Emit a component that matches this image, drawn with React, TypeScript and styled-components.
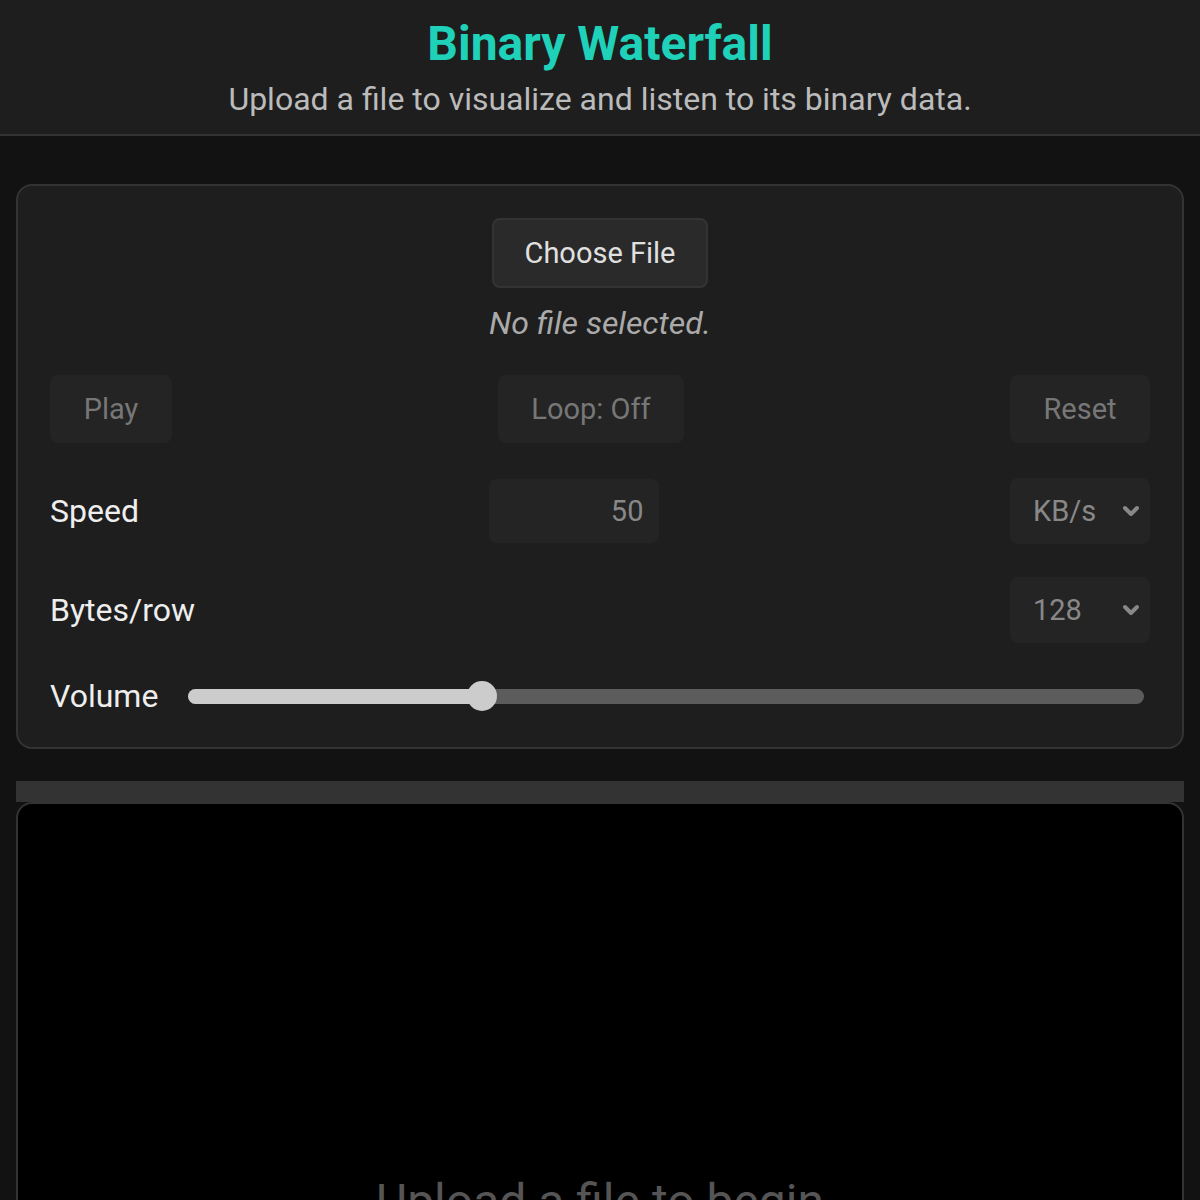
import React from "react";
import styled, { createGlobalStyle } from "styled-components";

const Global = createGlobalStyle`
  html, body { margin: 0; padding: 0; background: #121212; }
  body { font-family: Roboto, "Noto Sans", "Liberation Sans", sans-serif; color: #e0e0e0; }
  * { box-sizing: border-box; }
`;

const Page = styled.div`
  width: 1200px;
  height: 1200px;
  overflow: hidden;
  background: #121212;
`;

const Header = styled.header`
  height: 136px;
  background: #1e1e1e;
  border-bottom: 2px solid #333;
  display: flex;
  flex-direction: column;
  align-items: center;
  padding-top: 14px;
`;

const Title = styled.h1`
  margin: 0;
  font-size: 48px;
  line-height: 60px;
  font-weight: 700;
  color: #1fd1b9;
`;

const Subtitle = styled.p`
  margin: 0;
  font-size: 32px;
  line-height: 50px;
  color: #bbbbbb;
`;

const Main = styled.main`
  padding: 48px 16px 0;
  display: flex;
  flex-direction: column;
`;

const Panel = styled.section`
  background: #1e1e1e;
  border: 2px solid #333;
  border-radius: 16px;
  padding: 32px;
  display: flex;
  flex-direction: column;
`;

const FileBlock = styled.div`
  display: flex;
  flex-direction: column;
  align-items: center;
`;

const FileButton = styled.button`
  width: 216px;
  height: 70px;
  background: #2a2a2a;
  border: 2px solid #333;
  border-radius: 8px;
  color: #e0e0e0;
  font-family: inherit;
  font-size: 29px;
`;

const FileName = styled.div`
  margin-top: 16px;
  font-size: 32px;
  line-height: 38px;
  font-style: italic;
  color: #aaaaaa;
`;

const Row = styled.div<{ $mt: number; $h: number }>`
  margin-top: ${(p) => p.$mt}px;
  height: ${(p) => p.$h}px;
  display: flex;
  align-items: center;
  justify-content: space-between;
`;

const Btn = styled.button<{ $w: number }>`
  width: ${(p) => p.$w}px;
  height: 68px;
  background: #242424;
  border: none;
  border-radius: 8px;
  color: #777;
  font-family: inherit;
  font-size: 29px;
`;

const Label = styled.span`
  font-size: 32px;
  color: #eeeeee;
`;

const NumberBox = styled.div`
  width: 170px;
  height: 64px;
  background: #242424;
  border-radius: 8px;
  display: flex;
  align-items: center;
  justify-content: flex-end;
  padding-right: 16px;
  font-size: 29px;
  color: #888;
`;

const Select = styled.div`
  width: 140px;
  height: 66px;
  background: #242424;
  border-radius: 8px;
  display: flex;
  align-items: center;
  justify-content: space-between;
  padding: 0 7px 0 23px;
  font-size: 29px;
  color: #888;
`;

const Slider = styled.div`
  flex: 1;
  margin-left: 30px;
  margin-right: 6px;
  height: 30px;
  position: relative;
  display: flex;
  align-items: center;
`;

const Track = styled.div`
  width: 100%;
  height: 15px;
  border-radius: 8px;
  background: #5c5c5c;
  overflow: hidden;
`;

const Fill = styled.div`
  height: 100%;
  background: #cccccc;
`;

const Thumb = styled.div`
  position: absolute;
  top: 0;
  width: 30px;
  height: 30px;
  border-radius: 50%;
  background: #cccccc;
  transform: translateX(-50%);
`;

const Bar = styled.div`
  margin-top: 32px;
  height: 21px;
  background: #333;
`;

const Canvas = styled.div`
  height: 420px;
  background: #000;
  border: 2px solid #333;
  border-bottom: none;
  border-radius: 16px 16px 0 0;
  display: flex;
  justify-content: center;
  padding-top: 370px;
`;

const Placeholder = styled.div`
  font-size: 48px;
  line-height: 56px;
  color: #555;
`;

const Chevron = () => (
  <svg width="24" height="24" viewBox="0 0 24 24" fill="none" stroke="#888" strokeWidth="4" strokeLinecap="round" strokeLinejoin="round">
    <polyline points="6 9 12 15 18 9" />
  </svg>
);

export default function App() {
  const volume = 0.307;
  return (
    <Page>
      <Global />
      <Header>
        <Title>Binary Waterfall</Title>
        <Subtitle>Upload a file to visualize and listen to its binary data.</Subtitle>
      </Header>
      <Main>
        <Panel>
          <FileBlock>
            <FileButton>Choose File</FileButton>
            <FileName>No file selected.</FileName>
          </FileBlock>
          <Row $mt={33} $h={68}>
            <Btn $w={122}>Play</Btn>
            <Btn $w={186}>Loop: Off</Btn>
            <Btn $w={140}>Reset</Btn>
          </Row>
          <Row $mt={35} $h={66}>
            <Label>Speed</Label>
            <NumberBox>50</NumberBox>
            <Select>
              <span>KB/s</span>
              <Chevron />
            </Select>
          </Row>
          <Row $mt={33} $h={66}>
            <Label>Bytes/row</Label>
            <Select>
              <span>128</span>
              <Chevron />
            </Select>
          </Row>
          <Row $mt={34} $h={38}>
            <Label>Volume</Label>
            <Slider>
              <Track>
                <Fill style={{ width: `${volume * 100}%` }} />
              </Track>
              <Thumb style={{ left: `${volume * 100}%` }} />
            </Slider>
          </Row>
        </Panel>
        <Bar />
        <Canvas>
          <Placeholder>Upload a file to begin</Placeholder>
        </Canvas>
      </Main>
    </Page>
  );
}
